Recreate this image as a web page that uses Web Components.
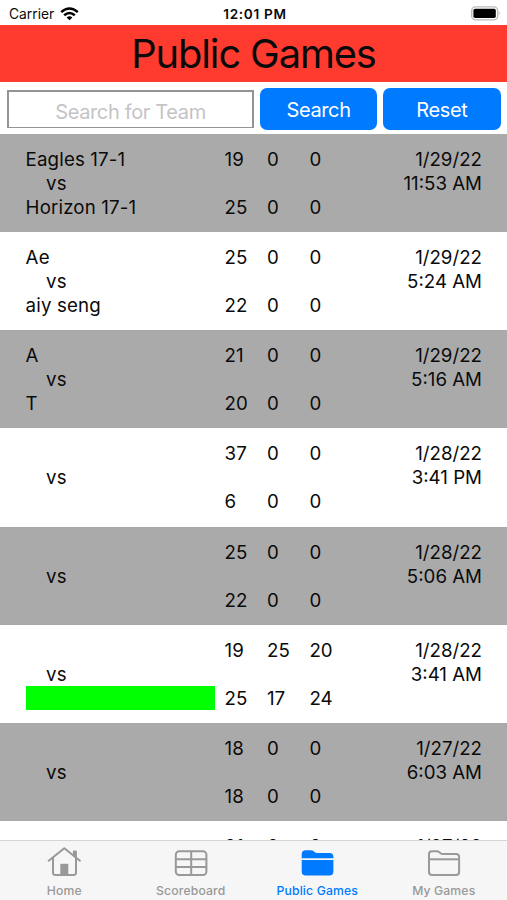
<!DOCTYPE html>
<html lang="en">
<head>
<meta charset="utf-8">
<title>Public Games</title>
<style>
  body {
    margin: 0;
    font-family: Inter, "Liberation Sans", sans-serif;
    color: #0a0a0a;
    background: #fff;
  }
</style>
</head>
<body>
<games-app></games-app>

<script>
const GAMES = [
  { home: "Eagles 17-1", away: "Horizon 17-1", a: [19, 0, 0], b: [25, 0, 0], date: "1/29/22", time: "11:53 AM" },
  { home: "Ae", away: "aiy seng", a: [25, 0, 0], b: [22, 0, 0], date: "1/29/22", time: "5:24 AM" },
  { home: "A", away: "T", a: [21, 0, 0], b: [20, 0, 0], date: "1/29/22", time: "5:16 AM" },
  { home: "", away: "", a: [37, 0, 0], b: [6, 0, 0], date: "1/28/22", time: "3:41 PM" },
  { home: "", away: "", a: [25, 0, 0], b: [22, 0, 0], date: "1/28/22", time: "5:06 AM" },
  { home: "", away: "", a: [19, 25, 20], b: [25, 17, 24], date: "1/28/22", time: "3:41 AM", marked: true },
  { home: "", away: "", a: [18, 0, 0], b: [18, 0, 0], date: "1/27/22", time: "6:03 AM" },
  { home: "", away: "", a: [21, 0, 0], b: [], date: "1/27/22", time: "", partial: true }
];

const ICONS = {
  home: `<g fill="none" stroke="currentColor" stroke-width="2" stroke-linecap="round" stroke-linejoin="round">
      <path d="M1.7 14.7 17.3 2.3 32.9 14.7"/>
      <path d="M6 12v14.5q0 2.5 2.5 2.5h18q2.5 0 2.5-2.5V12"/>
      <path d="M27 9V5.5h1.8v5.2" stroke-width="2.2"/></g>
      <path d="M13.3 17.8h8V29h-8z" fill="currentColor"/>`,
  table: `<g fill="none" stroke="currentColor" stroke-width="2">
      <rect x="1.8" y="5.3" width="30.6" height="23.7" rx="3.5"/>
      <path d="M1.8 13.2h30.6M1.8 21h30.6M17.2 5.3V29"/></g>`,
  folderFill: `<g fill="currentColor">
      <path d="M1.7 12.2V8.3q0-4 4-4h5q1.800 0 3 1l1.200 1q.9.7 2.200.7h12.600q3.700 0 3.700 4v1.200z"/>
      <path d="M1.7 14h31.7v11.5q0 4-4 4H5.7q-4 0-4-4z"/></g>`,
  folder: `<g fill="none" stroke="currentColor" stroke-width="2">
      <path d="M2 8.3q0-3 3-3h4.800q1.500 0 2.600.9l1.200 1q1 .8 2.500.8h13q3 0 3 3v15q0 3-3 3H5q-3 0-3-3z"/>
      <path d="M2 13.3h30.1"/></g>`
};

class StatusBar extends HTMLElement {
  constructor() {
    super();
    this.attachShadow({ mode: "open" });
  }

  connectedCallback() {
    this.shadowRoot.innerHTML = `
      <style>
        :host {
          display: grid;
          grid-template-columns: 1fr auto 1fr;
          align-items: center;
          height: 25px;
          padding: 2px 6px 0 9px;
          box-sizing: border-box;
          font-size: 13.8px;
        }
        .left { display: flex; align-items: center; gap: 6px; }
        .time { font-weight: 600; font-size: 13.6px; letter-spacing: .7px; }
        .right { display: flex; justify-content: flex-end; }
        svg { display: block; }
      </style>
      <div class="left"><span>Carrier</span>
        <svg width="19" height="14" viewBox="0 0 19 14" fill="none" stroke="#000" stroke-width="2.5">
          <path d="M1.2 5.1q8.3-7.3 16.6 0"/>
          <path d="M4.2 8.3q5.3-4.6 10.6 0"/>
          <path d="M9.5 13.3 6.6 10.4q2.9-2.4 5.8 0z" fill="#000" stroke="none"/>
        </svg>
      </div>
      <span class="time">12:01 PM</span>
      <div class="right">
        <svg width="30" height="15" viewBox="0 0 30 15">
          <rect x=".7" y=".9" width="26" height="13" rx="4" fill="#fff" stroke="#bbb" stroke-width="1.4"/>
          <rect x="2.4" y="2.8" width="22.4" height="9.2" rx="1.8" fill="#000"/>
          <path d="M28 5.2q1.8 2.2 0 4.4z" fill="#aaa"/>
        </svg>
      </div>
    `;
  }
}
customElements.define("status-bar", StatusBar);

class PageTitle extends HTMLElement {
  constructor() {
    super();
    this.attachShadow({ mode: "open" });
  }

  connectedCallback() {
    this.shadowRoot.innerHTML = `
      <style>
        :host {
          display: flex;
          justify-content: center;
          align-items: center;
          height: 57px;
          background: #ff3b30;
          font-size: 39.8px;
          letter-spacing: -1.1px;
        }
      </style>
      <slot></slot>
    `;
  }
}
customElements.define("page-title", PageTitle);

class ActionButton extends HTMLElement {
  constructor() {
    super();
    this.attachShadow({ mode: "open" });
  }

  connectedCallback() {
    this.shadowRoot.innerHTML = `
      <style>
        :host { display: block; height: 42px; }
        button {
          width: 100%;
          height: 100%;
          padding: 2px 0 0;
          border: none;
          border-radius: 7px;
          background: #007aff;
          color: #fff;
          font: 20px Inter, sans-serif;
          letter-spacing: -.35px;
        }
      </style>
      <button><slot></slot></button>
    `;
  }
}
customElements.define("action-button", ActionButton);

class SearchBar extends HTMLElement {
  constructor() {
    super();
    this.attachShadow({ mode: "open" });
  }

  connectedCallback() {
    this.shadowRoot.innerHTML = `
      <style>
        :host {
          display: grid;
          grid-template-columns: 247px 117.5px 117.5px;
          column-gap: 5.8px;
          align-items: start;
          height: 52px;
          padding: 6.4px 6px 0 7px;
          box-sizing: border-box;
        }
        .field {
          display: flex;
          align-items: center;
          justify-content: center;
          height: 38px;
          margin-top: 2px;
          padding-top: 5px;
          box-sizing: border-box;
          border: 2px solid #949494;
          border-bottom-width: 1px;
          color: #c4c4c6;
          font-size: 20px;
          letter-spacing: -.35px;
        }
      </style>
      <div class="field">Search for Team</div>
      <action-button>Search</action-button>
      <action-button>Reset</action-button>
    `;
  }
}
customElements.define("search-bar", SearchBar);

class GameRow extends HTMLElement {
  constructor() {
    super();
    this.attachShadow({ mode: "open" });
  }

  connectedCallback() {
    const g = this.game;
    const scores = (list) => list.map((n) => `<span>${n}</span>`).join("");
    this.shadowRoot.innerHTML = `
      <style>
        :host {
          display: grid;
          grid-template-columns: 189px 126px 1fr;
          column-gap: 10px;
          height: 98.13px;
          padding: 13px 25px 0 25.6px;
          box-sizing: border-box;
          font-size: 18.7px;
          line-height: 24px;
          background: #fff;
          white-space: nowrap;
        }
        :host([shaded]) { background: #aaa; }
        .teams, .scores, .when { display: grid; grid-template-rows: repeat(3, 24px); }
        .scores, .when { padding-top: 1px; }
        .teams div:not(.marked) { padding-top: 1px; }
        .teams { letter-spacing: .15px; }
        .teams .vs { padding-left: 20.5px; }
        .marked { background: #0f0; }
        .scores { grid-template-columns: repeat(3, 42.4px); }
        .scores span:nth-child(n+4) { grid-row: 3; }
        .when { text-align: right; }
      </style>
      <div class="teams">
        <div>${g.home}</div>
        <div class="vs">${g.partial ? "" : "vs"}</div>
        <div class="${g.marked ? "marked" : ""}">${g.away}</div>
      </div>
      <div class="scores">${scores(g.a)}${scores(g.b)}</div>
      <div class="when"><div>${g.date}</div><div>${g.time}</div></div>
    `;
  }
}
customElements.define("game-row", GameRow);

class GameList extends HTMLElement {
  constructor() {
    super();
    this.attachShadow({ mode: "open" });
  }

  connectedCallback() {
    this.shadowRoot.innerHTML = `
      <style>
        :host { display: block; overflow: hidden; }
      </style>
    `;
    GAMES.forEach((game, i) => {
      const row = document.createElement("game-row");
      row.game = game;
      row.toggleAttribute("shaded", i % 2 === 0);
      this.shadowRoot.appendChild(row);
    });
  }
}
customElements.define("game-list", GameList);

class TabItem extends HTMLElement {
  constructor() {
    super();
    this.attachShadow({ mode: "open" });
  }

  connectedCallback() {
    this.shadowRoot.innerHTML = `
      <style>
        :host {
          display: flex;
          flex-direction: column;
          align-items: center;
          padding-top: 5px;
          color: #999;
          font-size: 12.2px;
          font-weight: 500;
          letter-spacing: .15px;
        }
        :host([active]) { color: #007aff; }
        svg { display: block; }
        span { margin-top: 5px; line-height: 16px; }
      </style>
      <svg width="34" height="32" viewBox="0 0 34 32">${ICONS[this.getAttribute("icon")]}</svg>
      <span><slot></slot></span>
    `;
  }
}
customElements.define("tab-item", TabItem);

class TabBar extends HTMLElement {
  constructor() {
    super();
    this.attachShadow({ mode: "open" });
  }

  connectedCallback() {
    this.shadowRoot.innerHTML = `
      <style>
        :host {
          display: grid;
          grid-template-columns: repeat(4, 1fr);
          height: 60px;
          padding-left: 1px;
          box-sizing: border-box;
          border-top: 1px solid #d5d5d5;
          background: #f6f6f6;
        }
      </style>
      <slot></slot>
    `;
  }
}
customElements.define("tab-bar", TabBar);

class GamesApp extends HTMLElement {
  constructor() {
    super();
    this.attachShadow({ mode: "open" });
  }

  connectedCallback() {
    this.shadowRoot.innerHTML = `
      <style>
        :host {
          display: grid;
          grid-template-rows: auto auto auto minmax(0, 1fr) auto;
          width: 507px;
          height: 900px;
          overflow: hidden;
        }
      </style>
      <status-bar></status-bar>
      <page-title>Public Games</page-title>
      <search-bar></search-bar>
      <game-list></game-list>
      <tab-bar>
        <tab-item icon="home">Home</tab-item>
        <tab-item icon="table">Scoreboard</tab-item>
        <tab-item icon="folderFill" active>Public Games</tab-item>
        <tab-item icon="folder">My Games</tab-item>
      </tab-bar>
    `;
  }
}
customElements.define("games-app", GamesApp);
</script>
</body>
</html>
